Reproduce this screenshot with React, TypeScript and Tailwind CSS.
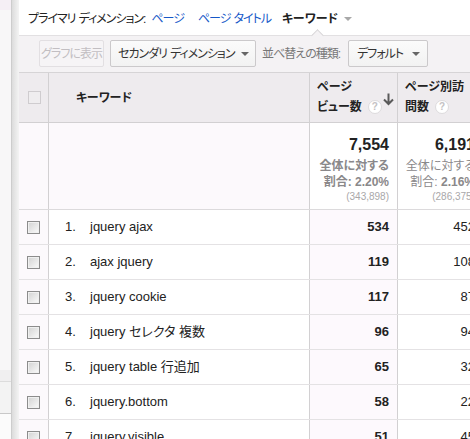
import React from 'react';

const FONT = "font-['Liberation_Sans','Noto_Sans_CJK_JP',sans-serif] [font-feature-settings:'palt']";

const rows: [string, number, number][] = [
  ['jquery ajax', 534, 452],
  ['ajax jquery', 119, 108],
  ['jquery cookie', 117, 87],
  ['jquery セレクタ 複数', 96, 94],
  ['jquery table 行追加', 65, 32],
  ['jquery.bottom', 58, 22],
  ['jquery.visible', 51, 45],
];

function Check({ disabled }: { disabled?: boolean }) {
  if (disabled) {
    return <span className="block h-[13px] w-[13px] border border-[#cfcccf] bg-[#efedef]" />;
  }
  return (
    <span className="block h-[13px] w-[13px] border border-[#8c8c8c] bg-linear-to-br from-[#d2d2d2] to-[#fbfbfb] shadow-[inset_0_0_0_1px_#f0f0f0]" />
  );
}

function Caret({ color = 'border-t-[#666]' }: { color?: string }) {
  return <span className={`inline-block border-x-[4px] border-t-[4px] border-x-transparent ${color}`} />;
}

function Help() {
  return (
    <span className="ml-[6px] inline-flex h-[14px] w-[14px] items-center justify-center rounded-full border border-[#dddbdd] bg-white text-[10px] font-bold leading-none text-[#c4c2c4]">
      ?
    </span>
  );
}

export default function App() {
  return (
    <div className={`flex h-[439px] w-[470px] overflow-hidden bg-white text-[#222] ${FONT}`}>
      {/* left page strip */}
      <div className="flex w-[11px] shrink-0 flex-col bg-[#f8f7f8]">
        <div className="h-[10px] bg-[#f5eff5]" />
        <div className="flex-1" />
        <div className="h-[11px] bg-[#f0eff0]" />
        <div className="h-[32px] border-t border-[#dcdcdc] bg-[#f3f3f3]" />
        <div className="h-[26px] border-t border-[#c8c8c8] bg-[#fbfbfb]" />
      </div>
      <div className="w-[8px] shrink-0 border-l border-[#cdcdcd] bg-linear-to-r from-[#dcdcdc] to-[#f4f4f4]" />

      <div className="w-[471px] shrink-0">
        {/* primary dimension */}
        <div className="flex h-[36px] items-center whitespace-nowrap border-b border-[#e2e0e2] pl-[9px] pt-[3px] text-[12px] tracking-[-1px]">
          <span>プライマリ</span>
          <span className="ml-[3px]">ディメンション:</span>
          <a className="ml-[6px] text-[#1558c8]">ページ</a>
          <a className="ml-[14px] text-[#1558c8]">
            ページ<span className="ml-[3px]">タイトル</span>
          </a>
          <span className="ml-[11px] font-bold tracking-[0px]">キーワード</span>
          <span className="ml-[6px] flex items-center">
            <Caret color="border-t-[#a8a8a8]" />
          </span>
        </div>

        {/* toolbar */}
        <div className="relative flex h-[37px] items-start gap-[6px] whitespace-nowrap border-b border-[#d6d4d6] bg-[#f4f2f4] pl-[20px] pt-[4px] text-[12px] tracking-[-1px]">
          <span className="absolute left-[294px] top-[-5px] h-[9px] w-[9px] rotate-45 border-l border-t border-[#d8d6d8] bg-[#f4f2f4]" />
          <button className="flex h-[27px] w-[65px] items-center justify-center rounded-[2px] border border-[#e2dfe2] bg-[#f6f4f6] text-[#c2bec2]">
            グラフに表示
          </button>
          <button className="flex h-[27px] w-[146px] items-center justify-between rounded-[2px] border border-[#cbc9cb] bg-linear-to-b from-[#fbfbfb] to-[#f2f2f2] pl-[7px] pr-[6px] text-[#333]">
            <span>
              セカンダリ<span className="ml-[3px]">ディメンション</span>
            </span>
            <Caret />
          </button>
          <span className="flex h-[27px] items-center text-[#777]">並べ替えの種類:</span>
          <button className="ml-[2px] flex h-[27px] w-[80px] items-center justify-between rounded-[2px] border border-[#cbc9cb] bg-linear-to-b from-[#fbfbfb] to-[#f2f2f2] pl-[8px] pr-[7px] text-[#333]">
            <span>デフォルト</span>
            <Caret />
          </button>
        </div>

        {/* header */}
        <div className="flex h-[50px] border-b border-[#d2d0d2] bg-[#eeebee] text-[12px] font-bold">
          <div className="flex w-[30px] items-center justify-center border-r border-[#d2d0d2] pl-[1px]">
            <Check disabled />
          </div>
          <div className="flex w-[261px] items-center border-r border-[#d2d0d2] pl-[27px]">キーワード</div>
          <div className="relative w-[88px] border-r border-[#d2d0d2] pl-[7px] pt-[4px] leading-[20px]">
            <div>ページ</div>
            <div className="flex items-center">
              ビュー数
              <Help />
            </div>
            <svg className="absolute right-[3px] top-[20px]" width="11" height="13" viewBox="0 0 11 13">
              <path d="M5.5 0.5 V11 M1 6.5 L5.5 11 L10 6.5" fill="none" stroke="#5a5a5a" strokeWidth="2" />
            </svg>
          </div>
          <div className="w-[86px] border-r border-[#d2d0d2] pl-[7px] pt-[4px] leading-[20px]">
            <div className="whitespace-nowrap">ページ別訪</div>
            <div className="flex items-center">
              問数
              <Help />
            </div>
          </div>
        </div>

        {/* totals */}
        <div className="flex h-[87px] border-b border-[#dcdadc] bg-[#fcf9fc]">
          <div className="w-[30px] border-r border-[#d2d0d2]" />
          <div className="w-[261px] border-r border-[#d2d0d2]" />
          <div className="w-[88px] border-r border-[#d2d0d2] bg-white pr-[8px] pt-[12px] text-right">
            <div className="text-[16px] font-bold leading-[20px]">7,554</div>
            <div className="mt-[3px] text-[12px] font-bold leading-[16px] text-[#8a888a]">全体に対する</div>
            <div className="text-[12px] font-bold leading-[16px] text-[#8a888a]">割合: 2.20%</div>
            <div className="text-[10px] leading-[14px] text-[#a9a7a9]">(343,898)</div>
          </div>
          <div className="w-[86px] border-r border-[#d2d0d2] bg-white pr-[8px] pt-[12px] text-right whitespace-nowrap">
            <div className="text-[16px] font-bold leading-[20px]">6,191</div>
            <div className="mt-[3px] text-[12px] leading-[16px] text-[#8a888a]">全体に対する</div>
            <div className="text-[12px] leading-[16px] text-[#8a888a]">
              割合: <span className="font-bold">2.16%</span>
            </div>
            <div className="text-[10px] leading-[14px] text-[#a9a7a9]">(286,375)</div>
          </div>
        </div>

        {/* rows */}
        {rows.map(([kw, pv, vis], i) => (
          <div key={kw} className="flex h-[35px] border-b border-[#e4e2e4] text-[13px]">
            <div className="flex w-[30px] items-center justify-center border-r border-[#d2d0d2] bg-[#fcf9fc]">
              <Check />
            </div>
            <div className="flex w-[261px] items-center border-r border-[#d2d0d2] pl-[16px]">
              <span className="w-[25px]">{i + 1}.</span>
              <span>{kw}</span>
            </div>
            <div className="flex w-[88px] items-center justify-end border-r border-[#d2d0d2] bg-[#fdf9fd] pr-[8px] font-bold">
              {pv}
            </div>
            <div className="flex w-[86px] items-center justify-end border-r border-[#d2d0d2] pr-[8px]">{vis}</div>
          </div>
        ))}
      </div>
    </div>
  );
}
